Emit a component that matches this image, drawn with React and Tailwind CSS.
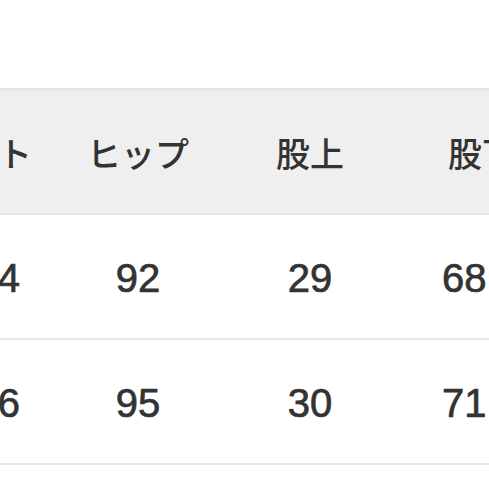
import React from 'react';

const cols = ['ウエスト', 'ヒップ', '股上', '股下'];
const rows = [
  ['64', '92', '29', '68'],
  ['66', '95', '30', '71.5'],
];

const jp = { fontFamily: '"Noto Sans CJK JP", "Noto Sans", sans-serif' };
const num = { fontFamily: '"Liberation Sans", Arial, sans-serif' };

const App = () => {
  return (
    <div className="w-[489px] h-[489px] overflow-hidden bg-white text-[#333333]" style={jp}>
      <div className="pt-[88px]">
        {/* header */}
        <div className="flex h-[127px] items-center border-t-[3px] border-b-[2px] border-[#e5e5e5] bg-[#efefef] text-[34px] font-medium">
          {cols.map((c, i) => (
            <div
              key={c}
              className={i === 0 ? 'w-[172px] -ml-[120px] shrink-0 text-right pr-[20px] whitespace-nowrap' : 'w-[172px] shrink-0 text-center whitespace-nowrap'}
            >
              {c}
            </div>
          ))}
        </div>

        {rows.map((r, ri) => (
          <div
            key={ri}
            className="flex h-[125px] items-center border-b-[2px] border-[#e9e9e9] text-[40px] [-webkit-text-stroke:0.7px_#333333]"
            style={num}
          >
            {r.map((v, i) => (
              <div
                key={i}
                className={i === 0 ? 'w-[172px] -ml-[120px] shrink-0 text-right pr-[32px] pt-[2px]' : i === 3 ? 'w-[172px] shrink-0 pl-[46px] whitespace-nowrap pt-[2px]' : 'w-[172px] shrink-0 text-center pt-[2px]'}
              >
                {v}
              </div>
            ))}
          </div>
        ))}
      </div>
    </div>
  );
};

export default App;
